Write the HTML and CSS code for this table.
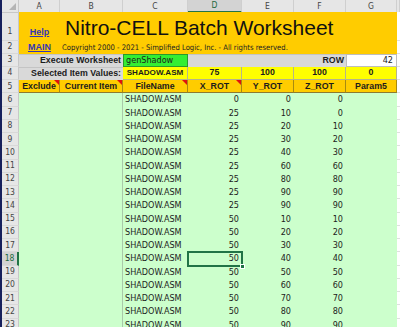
FILE: index.html
```html
<!DOCTYPE html>
<html>
<head>
<meta charset="utf-8">
<link rel="stylesheet" href="styles.css">
</head>
<body>
<div class="sheet">
  <div class="row hdr">
    <div class="strip"></div>
    <div class="corner"><span class="tri"></span></div>
    <div class="ch">A</div>
    <div class="ch">B</div>
    <div class="ch">C</div>
    <div class="ch sel">D</div>
    <div class="ch">E</div>
    <div class="ch">F</div>
    <div class="ch">G</div>
    <div class="ch"></div>
  </div>
  <div class="row r1">
    <div class="strip"></div>
    <div class="rh bottom">1</div>
    <div class="c org link-cell"><a class="link" href="#">Help</a></div>
    <div class="c org title">Nitro-CELL Batch Worksheet</div>
    <div class="c plain"></div>
  </div>
  <div class="row r2">
    <div class="strip"></div>
    <div class="rh">2</div>
    <div class="c org center"><a class="link" href="#">MAIN</a></div>
    <div class="c org copy">Copyright 2000 - 2021 - Simplified Logic, Inc. - All rights reserved.</div>
    <div class="c plain"></div>
  </div>
  <div class="row r3">
    <div class="strip"></div>
    <div class="rh">3</div>
    <div class="c gray span2 right bold">Execute Worksheet</div>
    <div class="c lime">genShadow</div>
    <div class="c gray span3 right bold">ROW</div>
    <div class="c white right">42</div>
    <div class="c plain"></div>
  </div>
  <div class="row r4">
    <div class="strip"></div>
    <div class="rh">4</div>
    <div class="c gray span2 right bold">Selected Item Values:</div>
    <div class="c yel center val">SHADOW.ASM</div>
    <div class="c yel center val num">75</div>
    <div class="c yel center val num">100</div>
    <div class="c yel center val num">100</div>
    <div class="c yel center val num">0</div>
    <div class="c plain"></div>
  </div>
  <div class="row r5">
    <div class="strip"></div>
    <div class="rh">5</div>
    <div class="c head">Exclude<span class="note"></span></div>
    <div class="c head">Current Item<span class="note"></span></div>
    <div class="c head">FileName<span class="note"></span></div>
    <div class="c head">X_ROT<span class="note"></span></div>
    <div class="c head">Y_ROT</div>
    <div class="c head">Z_ROT</div>
    <div class="c head">Param5</div>
    <div class="c plain"></div>
  </div>
  <div class="row"><div class="strip"></div><div class="rh">6</div><div class="c g"></div><div class="c g bc"></div><div class="c g">SHADOW.ASM</div><div class="c g right">0</div><div class="c g right">0</div><div class="c g right">0</div><div class="c g"></div><div class="c plain"></div></div>
  <div class="row"><div class="strip"></div><div class="rh">7</div><div class="c g"></div><div class="c g bc"></div><div class="c g">SHADOW.ASM</div><div class="c g right">25</div><div class="c g right">10</div><div class="c g right">0</div><div class="c g"></div><div class="c plain"></div></div>
  <div class="row"><div class="strip"></div><div class="rh">8</div><div class="c g"></div><div class="c g bc"></div><div class="c g">SHADOW.ASM</div><div class="c g right">25</div><div class="c g right">20</div><div class="c g right">10</div><div class="c g"></div><div class="c plain"></div></div>
  <div class="row"><div class="strip"></div><div class="rh">9</div><div class="c g"></div><div class="c g bc"></div><div class="c g">SHADOW.ASM</div><div class="c g right">25</div><div class="c g right">30</div><div class="c g right">20</div><div class="c g"></div><div class="c plain"></div></div>
  <div class="row"><div class="strip"></div><div class="rh">10</div><div class="c g"></div><div class="c g bc"></div><div class="c g">SHADOW.ASM</div><div class="c g right">25</div><div class="c g right">40</div><div class="c g right">30</div><div class="c g"></div><div class="c plain"></div></div>
  <div class="row"><div class="strip"></div><div class="rh">11</div><div class="c g"></div><div class="c g bc"></div><div class="c g">SHADOW.ASM</div><div class="c g right">25</div><div class="c g right">60</div><div class="c g right">60</div><div class="c g"></div><div class="c plain"></div></div>
  <div class="row"><div class="strip"></div><div class="rh">12</div><div class="c g"></div><div class="c g bc"></div><div class="c g">SHADOW.ASM</div><div class="c g right">25</div><div class="c g right">80</div><div class="c g right">80</div><div class="c g"></div><div class="c plain"></div></div>
  <div class="row"><div class="strip"></div><div class="rh">13</div><div class="c g"></div><div class="c g bc"></div><div class="c g">SHADOW.ASM</div><div class="c g right">25</div><div class="c g right">90</div><div class="c g right">90</div><div class="c g"></div><div class="c plain"></div></div>
  <div class="row"><div class="strip"></div><div class="rh">14</div><div class="c g"></div><div class="c g bc"></div><div class="c g">SHADOW.ASM</div><div class="c g right">25</div><div class="c g right">90</div><div class="c g right">90</div><div class="c g"></div><div class="c plain"></div></div>
  <div class="row"><div class="strip"></div><div class="rh">15</div><div class="c g"></div><div class="c g bc"></div><div class="c g">SHADOW.ASM</div><div class="c g right">50</div><div class="c g right">10</div><div class="c g right">10</div><div class="c g"></div><div class="c plain"></div></div>
  <div class="row"><div class="strip"></div><div class="rh">16</div><div class="c g"></div><div class="c g bc"></div><div class="c g">SHADOW.ASM</div><div class="c g right">50</div><div class="c g right">20</div><div class="c g right">20</div><div class="c g"></div><div class="c plain"></div></div>
  <div class="row"><div class="strip"></div><div class="rh">17</div><div class="c g"></div><div class="c g bc"></div><div class="c g">SHADOW.ASM</div><div class="c g right">50</div><div class="c g right">30</div><div class="c g right">30</div><div class="c g"></div><div class="c plain"></div></div>
  <div class="row"><div class="strip"></div><div class="rh sel">18</div><div class="c g"></div><div class="c g bc"></div><div class="c g">SHADOW.ASM</div><div class="c g right active">50<span class="handle"></span></div><div class="c g right">40</div><div class="c g right">40</div><div class="c g"></div><div class="c plain"></div></div>
  <div class="row"><div class="strip"></div><div class="rh">19</div><div class="c g"></div><div class="c g bc"></div><div class="c g">SHADOW.ASM</div><div class="c g right">50</div><div class="c g right">50</div><div class="c g right">50</div><div class="c g"></div><div class="c plain"></div></div>
  <div class="row"><div class="strip"></div><div class="rh">20</div><div class="c g"></div><div class="c g bc"></div><div class="c g">SHADOW.ASM</div><div class="c g right">50</div><div class="c g right">60</div><div class="c g right">60</div><div class="c g"></div><div class="c plain"></div></div>
  <div class="row"><div class="strip"></div><div class="rh">21</div><div class="c g"></div><div class="c g bc"></div><div class="c g">SHADOW.ASM</div><div class="c g right">50</div><div class="c g right">70</div><div class="c g right">70</div><div class="c g"></div><div class="c plain"></div></div>
  <div class="row"><div class="strip"></div><div class="rh">22</div><div class="c g"></div><div class="c g bc"></div><div class="c g">SHADOW.ASM</div><div class="c g right">50</div><div class="c g right">80</div><div class="c g right">80</div><div class="c g"></div><div class="c plain"></div></div>
  <div class="row"><div class="strip"></div><div class="rh">23</div><div class="c g"></div><div class="c g bc"></div><div class="c g">SHADOW.ASM</div><div class="c g right">50</div><div class="c g right">90</div><div class="c g right">90</div><div class="c g"></div><div class="c plain"></div></div>
</div>
</body>
</html>
```
FILE: styles.css
```css
* { box-sizing: border-box; }
html, body { margin: 0; padding: 0; }
body {
  width: 400px;
  height: 327px;
  overflow: hidden;
  background: #fff;
  font-family: "DejaVu Sans Condensed", "DejaVu Sans", sans-serif;
  font-size: 9px;
  color: #1c1c1c;
}
.sheet { display: flex; flex-direction: column; }
.row {
  display: grid;
  grid-template-columns: 2px 17px 41px 63px 65px 54px 52px 52px 51px 3px;
  height: 13.25px;
  flex: none;
}
.row.hdr { height: 12px; }
.row.r1 { height: 28.5px; }
.row.r2 { height: 13px; }

.strip { background: #16205c; }
.corner {
  background: #e6e6e6;
  border-right: 1px solid #c8c8c8;
  border-bottom: 1px solid #c8c8c8;
  position: relative;
}
.corner .tri {
  position: absolute;
  right: 2px;
  bottom: 2px;
  width: 0;
  height: 0;
  border-left: 7px solid transparent;
  border-bottom: 7px solid #b4b4b4;
}
.ch {
  background: #e6e6e6;
  border-right: 1px solid #cfcfcf;
  border-bottom: 1px solid #c8c8c8;
  display: flex;
  align-items: center;
  justify-content: center;
  color: #444;
  font-size: 8.5px;
  line-height: 11px;
}
.ch.sel {
  background: #d3d3d3;
  color: #1e6b40;
  border-bottom: 2px solid #217346;
}
.rh {
  background: #e6e6e6;
  border-right: 1px solid #c8c8c8;
  border-bottom: 1px solid #d8d8d8;
  display: flex;
  align-items: center;
  justify-content: center;
  color: #444;
  font-size: 8.5px;
  line-height: 11px;
}
.rh.bottom { align-items: flex-end; padding-bottom: 3px; }
.rh.sel {
  background: #d3d3d3;
  color: #1e6b40;
  border-right: 2px solid #217346;
}

.c {
  display: flex;
  align-items: center;
  padding: 0 2px;
  white-space: nowrap;
  position: relative;
  line-height: 11px;
  min-width: 0;
}
.right { justify-content: flex-end; }
.center { justify-content: center; }
.bold, .head, .val, .link {
  font-family: "Liberation Sans", Arial, sans-serif;
  font-weight: bold;
  font-size: 8.8px;
}
.val { font-size: 8.1px; }
.val.num { font-size: 8.8px; }
.span2 { grid-column: span 2; }
.span3 { grid-column: span 3; }
.plain { background: #fff; border-bottom: 1px solid #e0e0e0; }

.org { background: #ffcc00; }
.link-cell { justify-content: center; align-items: flex-end; padding-bottom: 3px; }
.link { color: #3535b5; text-decoration: underline; font-size: 9px; }
.title {
  grid-column: 4 / 10;
  font-family: "Liberation Sans", Arial, sans-serif;
  font-size: 21px;
  line-height: 24px;
  align-items: flex-end;
  padding-left: 5px;
  padding-bottom: 1px;
  color: #111;
}
.copy {
  grid-column: 4 / 10;
  font-size: 7.6px;
  padding-left: 2px;
  color: #222;
}

.gray { background: #d9d9d9; border-top: 1px solid #c4c4c4; }
.lime { background: #33ee33; border: 1px solid #2a9a2a; padding-left: 2px; }
.white { background: #fff; border: 1px solid #bdbdbd; padding-right: 3px; }
.yel { background: #ffff00; border-right: 1px solid #b5b58a; border-bottom: 1px solid #b5b58a; }

.head {
  background: #ffcc00;
  justify-content: center;
  border-right: 1px solid #a88a10;
  border-bottom: 1px solid #8c7a30;
}
.note {
  position: absolute;
  top: 0;
  right: 0;
  width: 0;
  height: 0;
  border-left: 5px solid transparent;
  border-top: 5px solid #e01010;
}

.g { background: #ccffcc; }
.bc { border-right: 1px solid #a9c9a9; }
.g.right { padding-right: 3px; }
.active { outline: 2px solid #217346; outline-offset: -1px; z-index: 1; }
.handle {
  position: absolute;
  right: -3px;
  bottom: -3px;
  width: 5px;
  height: 5px;
  background: #217346;
  border: 1px solid #fff;
}
```
